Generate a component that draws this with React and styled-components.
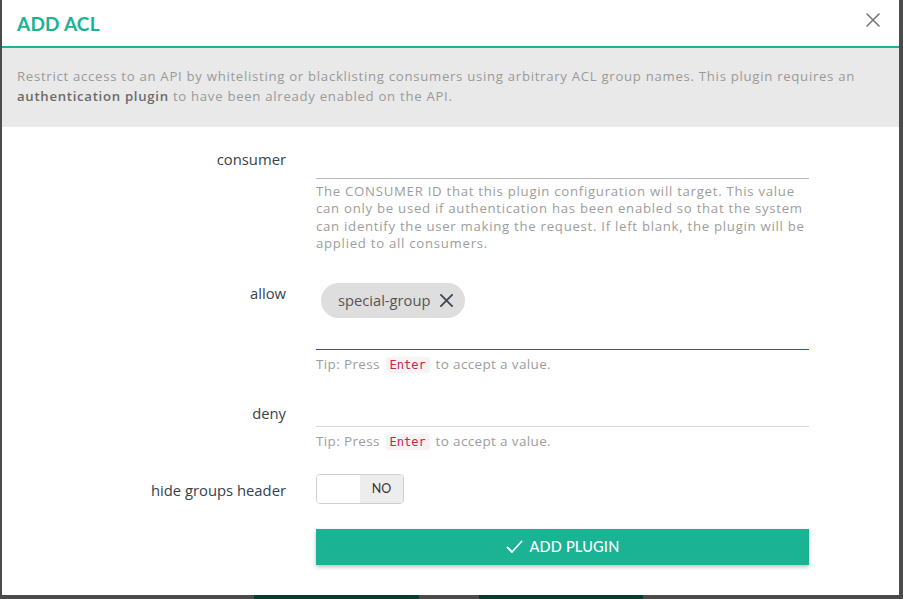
import React from 'react';
import styled, { createGlobalStyle } from 'styled-components';

const GlobalStyle = createGlobalStyle`
  html, body {
    margin: 0;
    padding: 0;
    background: #4b4b4b;
  }
  body {
    font-family: "Open Sans", "Liberation Sans", sans-serif;
  }
`;

const Page = styled.div`
  width: 903px;
  height: 599px;
  overflow: hidden;
  background: #4b4b4b;
  display: flex;
  flex-direction: column;
`;

const Modal = styled.div`
  margin-left: 2px;
  width: 897px;
  height: 595px;
  flex-shrink: 0;
  background: #fff;
  display: flex;
  flex-direction: column;
`;

const Header = styled.div`
  height: 46px;
  padding: 0 17px 0 15px;
  display: flex;
  align-items: center;
  justify-content: space-between;
  border-bottom: 2px solid #1ab394;
`;

const Title = styled.h1`
  margin: 0;
  font-family: "Lato", sans-serif;
  font-size: 19px;
  font-weight: 700;
  color: #1ab394;
  letter-spacing: 0.2px;
`;

const CloseButton = styled.button`
  border: none;
  background: none;
  padding: 0;
  margin-top: -6px;
  width: 18px;
  height: 18px;
  display: flex;
  align-items: center;
  justify-content: center;
  cursor: pointer;
`;

const Description = styled.p`
  margin: 0;
  background: #e9e9e9;
  padding: 18px 15px 21px;
  font-size: 13.2px;
  letter-spacing: 0.7px;
  line-height: 20px;
  color: #9a9a9a;
  strong {
    color: #6b6b6b;
    font-weight: 600;
  }
`;

const Form = styled.div`
  padding-top: 12px;
  display: grid;
  grid-template-columns: 284px 493px;
  column-gap: 30px;
  row-gap: 20px;
`;

const Label = styled.div`
  text-align: right;
  padding-top: 10px;
  font-family: "Open Sans", sans-serif;
  font-size: 14.8px;
  font-weight: 500;
  line-height: 20px;
  color: #36424d;
`;

const Field = styled.div`
  display: flex;
  flex-direction: column;
`;

const Line = styled.div`
  box-sizing: border-box;
  height: ${(p) => p.$h + 1}px;
  border-bottom: 1px solid ${(p) => (p.$focus ? '#2c5aa0' : p.$dark ? '#b8b8b8' : '#d6d6d6')};
  display: flex;
  align-items: flex-start;
  padding-top: ${(p) => p.$pad || 0}px;
`;

const Help = styled.div`
  margin-top: 4px;
  font-size: 13.2px;
  letter-spacing: 0.72px;
  line-height: 17.4px;
  color: #9d9d9d;
`;

const Tip = styled.div`
  margin-top: 6px;
  font-family: "Open Sans", sans-serif;
  font-size: 13.5px;
  letter-spacing: 0.35px;
  line-height: 16px;
  color: #9d9d9d;
`;

const Kbd = styled.code`
  font-family: "DejaVu Sans Mono", monospace;
  font-size: 12px;
  letter-spacing: 0;
  color: #c7254e;
  background: #f9f2f4;
  padding: 1px 4px;
  border-radius: 3px;
  margin: 0 2px;
`;

const Chip = styled.div`
  margin-left: 5px;
  height: 35px;
  padding: 0 12px 0 17px;
  border-radius: 18px;
  background: #dedede;
  display: flex;
  align-items: center;
  gap: 10px;
  font-family: "Open Sans", sans-serif;
  font-size: 14.7px;
  color: #555;
`;

const Toggle = styled.div`
  margin-top: 4px;
  width: 88px;
  height: 30px;
  box-sizing: border-box;
  border: 1px solid #cfcfcf;
  border-radius: 4px;
  display: flex;
  overflow: hidden;
`;

const ToggleHalf = styled.div`
  flex: 1;
  background: ${(p) => (p.$on ? '#ededed' : '#fff')};
  display: flex;
  align-items: center;
  justify-content: center;
  font-family: "Lato", sans-serif;
  font-size: 12.5px;
  color: #333;
`;

const SubmitButton = styled.button`
  grid-column: 2;
  margin-top: 5px;
  height: 36px;
  border: none;
  background: #1ab394;
  color: #fff;
  box-shadow: 0 2px 4px rgba(0, 0, 0, 0.25);
  display: flex;
  align-items: center;
  justify-content: center;
  gap: 7px;
  padding-left: 6px;
  font-family: "Lato", sans-serif;
  font-size: 14.5px;
  font-weight: 500;
  letter-spacing: 0.2px;
  cursor: pointer;
`;

const Underlay = styled.div`
  height: 4px;
  display: flex;
`;

const UnderBlock = styled.div`
  margin-left: ${(p) => p.$ml}px;
  width: ${(p) => p.$w}px;
  background: #073d30;
`;

const CloseIcon = ({ size = 14, color = '#777', width = 1.6 }) => (
  <svg width={size} height={size} viewBox="0 0 14 14">
    <path d="M1 1L13 13M13 1L1 13" stroke={color} strokeWidth={width} strokeLinecap="round" />
  </svg>
);

const CheckIcon = () => (
  <svg width="17" height="14" viewBox="0 0 17 14">
    <path d="M1.5 7.5L6 12L15.5 1.5" stroke="#fff" strokeWidth="1.8" fill="none" strokeLinecap="round" strokeLinejoin="round" />
  </svg>
);

const App = () => {
  return (
    <Page>
      <GlobalStyle />
      <Modal>
        <Header>
          <Title>ADD ACL</Title>
          <CloseButton>
            <CloseIcon />
          </CloseButton>
        </Header>
        <Description>
          Restrict access to an API by whitelisting or blacklisting consumers using arbitrary ACL group names. This plugin requires an{' '}
          <strong>authentication plugin</strong> to have been already enabled on the API.
        </Description>
        <Form>
          <Label>consumer</Label>
          <Field>
            <Line $h={39} $dark />
            <Help>
              The CONSUMER ID that this plugin configuration will target. This value can only be used if authentication has been enabled so that the system can identify the user making the request. If left blank, the plugin will be applied to all consumers.
            </Help>
          </Field>

          <Label>allow</Label>
          <Field>
            <Line $h={76} $pad={10} $focus>
              <Chip>
                special-group
                <CloseIcon size={13} color="#3d4a55" width={2} />
              </Chip>
            </Line>
            <Tip>
              Tip: Press <Kbd>Enter</Kbd> to accept a value.
            </Tip>
          </Field>

          <Label>deny</Label>
          <Field>
            <Line $h={33} />
            <Tip>
              Tip: Press <Kbd>Enter</Kbd> to accept a value.
            </Tip>
          </Field>

          <Label>hide groups header</Label>
          <Field>
            <Toggle>
              <ToggleHalf />
              <ToggleHalf $on>NO</ToggleHalf>
            </Toggle>
          </Field>

          <SubmitButton>
            <CheckIcon />
            ADD PLUGIN
          </SubmitButton>
        </Form>
      </Modal>
      <Underlay>
        <UnderBlock $ml={254} $w={165} />
        <UnderBlock $ml={60} $w={164} />
      </Underlay>
    </Page>
  );
};

export default App;
